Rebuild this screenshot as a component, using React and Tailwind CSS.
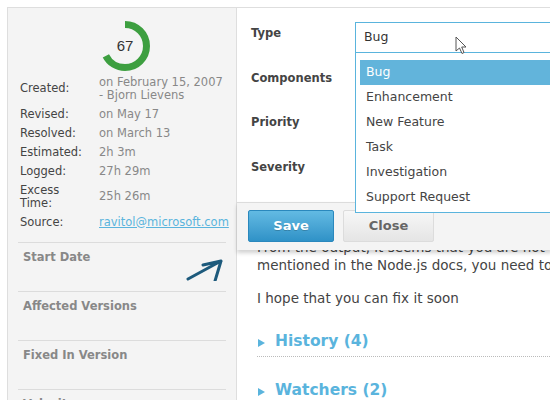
import React from "react";

const meta = [
  ["Created:", ["on February 15, 2007", "- Bjorn Lievens"]],
  ["Revised:", ["on May 17"]],
  ["Resolved:", ["on March 13"]],
  ["Estimated:", ["2h 3m"]],
  ["Logged:", ["27h 29m"]],
  ["Excess Time:", ["25h 26m"]],
];

const sections = ["Start Date", "Affected Versions", "Fixed In Version", "Velocity"];
const options = ["Bug", "Enhancement", "New Feature", "Task", "Investigation", "Support Request"];
const labels = ["Type", "Components", "Priority", "Severity"];

function Donut() {
  const r = 21.5;
  const c = 2 * Math.PI * r;
  return (
    <div className="relative w-[50px] h-[50px] ml-[92px]">
      <svg width="50" height="50" viewBox="0 0 50 50" className="absolute inset-0">
        <circle
          cx="25"
          cy="25"
          r={r}
          fill="none"
          stroke="#3d9f40"
          strokeWidth="7"
          strokeDasharray={`${c * 0.67} ${c}`}
          transform="rotate(-90 25 25)"
        />
      </svg>
      <div className="absolute inset-0 flex items-center justify-center text-[15px] text-[#333] font-['Liberation_Sans',sans-serif]">
        67
      </div>
    </div>
  );
}

function Tri() {
  return (
    <svg width="7" height="8" viewBox="0 0 7 8" className="mt-[3px]">
      <path d="M0 0 L7 4 L0 8 Z" fill="#5ab4dd" />
    </svg>
  );
}

export default function App() {
  return (
    <div className="relative w-[550px] h-[400px] overflow-hidden bg-white font-['DejaVu_Sans',sans-serif] pt-[7px] pl-[7px] flex">
      {/* Left panel */}
      <div className="w-[230px] shrink-0 h-[400px] bg-[#f4f4f4] border-l border-t border-r border-[#dedede] pt-[13px]">
        <Donut />
        <div className="mt-[4.5px] pl-[12px] flex flex-col gap-[6px] text-[11.5px] leading-[13px]">
          {meta.map(([k, v]) => (
            <div key={k} className="grid grid-cols-[79px_1fr] items-center">
              <div className="text-[#444] w-[60px]">{k}</div>
              <div className="text-[#888] whitespace-nowrap">
                {v.map((line) => (
                  <div key={line}>{line}</div>
                ))}
              </div>
            </div>
          ))}
          <div className="grid grid-cols-[79px_1fr] items-center">
            <div className="text-[#444]">Source:</div>
            <div className="text-[#5ab4dd] underline">ravitol@microsoft.com</div>
          </div>
        </div>
        <div className="mt-[13.5px]">
          {sections.map((s, i) => (
            <div key={s} className="relative mx-[10px] h-[49px] border-t border-[#dcdcdc] pt-[7px] pl-[5px]">
              <div className="text-[11.5px] leading-[14px] font-bold text-[#888]">{s}</div>
              {i === 0 && (
                <svg width="40" height="30" viewBox="0 0 40 30" className="absolute left-[166px] top-[8px]">
                  <path
                    d="M4 28 L37 10 M19 14 L37 10 L31 30"
                    fill="none"
                    stroke="#1d5a7c"
                    strokeWidth="3"
                    strokeLinecap="round"
                    strokeLinejoin="round"
                  />
                </svg>
              )}
            </div>
          ))}
        </div>
      </div>

      {/* Right area */}
      <div className="flex-1 flex flex-col border-t border-[#dedede]">
        <div className="h-[194px] bg-white pl-[14px] pt-[18px] flex flex-col gap-[30.5px]">
          {labels.map((l) => (
            <div key={l} className="text-[11.5px] leading-[14px] font-bold text-[#444]">
              {l}
            </div>
          ))}
        </div>
        <div className="relative z-10 h-[49px] bg-[#f4f4f4] border-t border-[#dcdcdc] shadow-[0_3px_4px_rgba(0,0,0,0.18)] pl-[11px] pt-[7px] flex gap-[9px]">
          <button className="w-[86px] h-[32px] rounded-[2px] border border-[#2a88bd] bg-gradient-to-b from-[#62bae3] to-[#2f92c7] text-white font-bold text-[13px] [text-shadow:0_1px_0_rgba(0,0,0,0.2)]">
            Save
          </button>
          <button className="w-[91px] h-[32px] rounded-[2px] border border-[#dcdcdc] bg-gradient-to-b from-[#f7f7f7] to-[#e5e5e5] text-[#666] font-bold text-[13px]">
            Close
          </button>
        </div>
        <div className="overflow-hidden pl-[20px] text-[13.5px] leading-[18px] text-[#444]">
          <div className="-mt-[12px] whitespace-nowrap">
            <div>From the output, it seems that you are not</div>
            <div>mentioned in the Node.js docs, you need to</div>
            <div className="mt-[15px]">I hope that you can fix it soon</div>
            <div className="mt-[24px] pb-[5px] border-b border-dotted border-[#bbb] flex items-center gap-[10px] pl-[1px]">
              <Tri />
              <span className="text-[15.5px] leading-[20px] font-bold text-[#5ab4dd]">History (4)</span>
            </div>
            <div className="mt-[23px] flex items-center gap-[10px] pl-[1px]">
              <Tri />
              <span className="text-[15.5px] leading-[20px] font-bold text-[#5ab4dd]">Watchers (2)</span>
            </div>
          </div>
        </div>
      </div>

      {/* Dropdown overlay */}
      <div className="absolute left-[355px] top-[22px] w-[230px] z-20">
        <div className="h-[31px] bg-white border border-[#5ab4dd] pl-[8px] flex items-center text-[12.5px] text-[#333]">
          Bug
        </div>
        <div className="bg-white border border-t-0 border-[#5ab4dd] pt-[7px] pb-[2px] pl-[4px]">
          {options.map((o, i) => (
            <div
              key={o}
              className={
                i === 0
                  ? "h-[25px] pl-[6px] flex items-center text-[12.5px] bg-[#62b4db] text-white"
                  : "h-[25px] pl-[6px] flex items-center text-[12.5px] text-[#444]"
              }
            >
              {o}
            </div>
          ))}
        </div>
      </div>

      {/* Cursor */}
      <svg width="14" height="20" viewBox="0 0 14 20" className="absolute left-[455px] top-[36px] z-30">
        <path d="M1 1 L1 15 L4.5 12 L7 17.5 L9 16.5 L6.7 11 L11 11 Z" fill="white" stroke="#555" strokeWidth="1" strokeLinejoin="round" />
      </svg>
    </div>
  );
}
